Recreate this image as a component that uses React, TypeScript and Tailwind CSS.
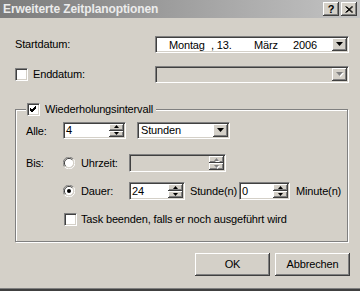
import React from "react";

const raised =
  "bg-[#d4d0c8] shadow-[inset_-1px_-1px_0_#404040,inset_1px_1px_0_#ffffff,inset_-2px_-2px_0_#808080,inset_2px_2px_0_#d4d0c8]";

function Tri({ up, disabled, w = 7, h = 4 }: { up?: boolean; disabled?: boolean; w?: number; h?: number }) {
  const pts = up ? `0,${h} ${w},${h} ${w / 2},0` : `0,0 ${w},0 ${w / 2},${h}`;
  return (
    <svg width={w + 1} height={h + 1} viewBox={`0 0 ${w + 1} ${h + 1}`}>
      {disabled && <polygon points={pts} fill="#ffffff" transform="translate(1,1)" />}
      <polygon points={pts} fill={disabled ? "#808080" : "#000000"} />
    </svg>
  );
}

function Field({
  className = "",
  disabled,
  children,
}: {
  className?: string;
  disabled?: boolean;
  children?: React.ReactNode;
}) {
  return (
    <div
      className={`flex items-stretch border border-t-[#808080] border-l-[#808080] border-b-white border-r-white p-[1px] shadow-[inset_1px_1px_0_#404040,inset_-1px_-1px_0_#d4d0c8] ${
        disabled ? "bg-[#d4d0c8]" : "bg-white"
      } ${className}`}
    >
      {children}
    </div>
  );
}

function DropBtn({ disabled }: { disabled?: boolean }) {
  return (
    <div className={`w-[15px] flex items-center justify-center ${raised}`}>
      <Tri disabled={disabled} />
    </div>
  );
}

function Spin({ disabled }: { disabled?: boolean }) {
  return (
    <div className="w-[15px] flex flex-col">
      <div className={`flex-1 flex items-center justify-center ${raised}`}>
        <Tri up disabled={disabled} w={5} h={3} />
      </div>
      <div className={`flex-1 flex items-center justify-center ${raised}`}>
        <Tri disabled={disabled} w={5} h={3} />
      </div>
    </div>
  );
}

function Check({ checked }: { checked?: boolean }) {
  return (
    <div className="w-[13px] h-[13px] shrink-0 bg-white border border-t-[#808080] border-l-[#808080] border-b-white border-r-white shadow-[inset_1px_1px_0_#404040,inset_-1px_-1px_0_#d4d0c8] flex items-center justify-center">
      {checked && (
        <svg width="7" height="7" viewBox="0 0 7 7">
          <path d="M0 2 L2 4 L6 0 M0 3 L2 5 L6 1 M0 4 L2 6 L6 2" stroke="#000" strokeWidth="1" fill="none" />
        </svg>
      )}
    </div>
  );
}

function Radio({ checked }: { checked?: boolean }) {
  return (
    <svg width="12" height="12" viewBox="0 0 12 12" className="shrink-0">
      <path d="M10.5 2.2 A5.5 5.5 0 0 0 1.5 9.8" stroke="#808080" strokeWidth="1" fill="none" />
      <path d="M1.5 9.8 A5.5 5.5 0 0 0 10.5 2.2" stroke="#ffffff" strokeWidth="1" fill="none" />
      <circle cx="6" cy="6" r="4.5" fill="#ffffff" />
      <path d="M9.3 2.8 A4.5 4.5 0 0 0 2.7 9.2" stroke="#404040" strokeWidth="1" fill="none" />
      <path d="M2.7 9.2 A4.5 4.5 0 0 0 9.3 2.8" stroke="#d4d0c8" strokeWidth="1" fill="none" />
      {checked && <circle cx="6" cy="6" r="2" fill="#000" />}
    </svg>
  );
}

export default function App() {
  return (
    <div className="w-[360px] h-[291px] bg-[#d4d0c8] flex flex-col overflow-hidden text-[11px] leading-none tracking-[-0.15px] text-black font-['Liberation_Sans',Arial,sans-serif]">
      {/* title bar */}
      <div className="h-[18px] shrink-0 flex items-center bg-gradient-to-r from-[#7c7c7c] to-[#c4c4c4] pl-[3px] pr-[3px]">
        <span className="font-bold text-[12px] tracking-[-0.1px] text-[#ececec]">Erweiterte Zeitplanoptionen</span>
        <div className="ml-auto flex gap-[2px]">
          <div className={`w-[16px] h-[14px] flex items-center justify-center text-[11px] font-bold ${raised}`}>?</div>
          <div className={`w-[16px] h-[14px] flex items-center justify-center ${raised}`}>
            <svg width="8" height="7" viewBox="0 0 8 7">
              <path d="M0.5 0.5 L7 6.5 M1.5 0.5 L8 6.5 M7 0.5 L0.5 6.5 M8 0.5 L1.5 6.5" stroke="#000" strokeWidth="1" />
            </svg>
          </div>
        </div>
      </div>

      <div className="flex flex-col flex-1 pl-[15px]">
        {/* Startdatum */}
        <div className="mt-[18px] flex items-center h-[17px]">
          <span className="w-[140px]">Startdatum:</span>
          <Field className="w-[194px] h-[17px]">
            <div className="flex-1 flex items-center pl-[12px] pt-[2px] h-full">
              <span className="w-[42px]">Montag</span>
              <span className="w-[43px]">, 13.</span>
              <span className="w-[39px]">März</span>
              <span>2006</span>
            </div>
            <DropBtn />
          </Field>
        </div>

        {/* Enddatum */}
        <div className="mt-[13px] flex items-center h-[17px]">
          <div className="w-[140px] flex items-center gap-[5px]">
            <Check />
            <span>Enddatum:</span>
          </div>
          <Field className="w-[194px] h-[17px]" disabled>
            <div className="flex-1" />
            <DropBtn disabled />
          </Field>
        </div>

        {/* group */}
        <div className="relative mt-[26px] w-[333px] h-[133px] border border-[#808080] shadow-[inset_1px_1px_0_#ffffff,1px_1px_0_#ffffff] pl-[10px] pt-[12px] flex flex-col">
          <div className="absolute left-[10px] top-[-7px] flex items-center gap-[5px] bg-[#d4d0c8] pl-[1px] pr-[3px]">
            <Check checked />
            <span>Wiederholungsintervall</span>
          </div>

          {/* Alle */}
          <div className="flex items-center h-[17px]">
            <span className="w-[37px] pt-[2px]">Alle:</span>
            <Field className="w-[63px] h-[17px]">
              <div className="flex-1 flex items-center pl-[1px]">4</div>
              <Spin />
            </Field>
            <Field className="ml-[11px] w-[93px] h-[17px]">
              <div className="flex-1 flex items-center pl-[2px]">Stunden</div>
              <DropBtn />
            </Field>
          </div>

          {/* Bis / Uhrzeit */}
          <div className="mt-[15px] flex items-center h-[18px]">
            <span className="w-[37px]">Bis:</span>
            <Radio />
            <span className="ml-[6px] w-[48px]">Uhrzeit:</span>
            <Field className="w-[97px] h-[18px]" disabled>
              <div className="flex-1" />
              <Spin disabled />
            </Field>
          </div>

          {/* Dauer */}
          <div className="mt-[10px] flex items-center h-[18px]">
            <span className="w-[37px]" />
            <Radio checked />
            <span className="ml-[6px] w-[48px]">Dauer:</span>
            <Field className="w-[56px] h-[18px]">
              <div className="flex-1 flex items-center pl-[1px]">24</div>
              <Spin />
            </Field>
            <span className="ml-[5px] w-[49px]">Stunde(n)</span>
            <Field className="w-[51px] h-[18px]">
              <div className="flex-1 flex items-center pl-[1px]">0</div>
              <Spin />
            </Field>
            <span className="ml-[6px]">Minute(n)</span>
          </div>

          {/* Task */}
          <div className="mt-[13px] flex items-center h-[13px] pl-[38px] gap-[4px]">
            <Check />
            <span>Task beenden, falls er noch ausgeführt wird</span>
          </div>
        </div>

        {/* buttons */}
        <div className="mt-[11px] flex justify-end gap-[5px] pr-[10px]">
          <div className={`w-[75px] h-[23px] flex items-center justify-center ${raised}`}>OK</div>
          <div className={`w-[75px] h-[23px] flex items-center justify-center ${raised}`}>Abbrechen</div>
        </div>
      </div>

      <div className="shrink-0 h-[1px] bg-[#808080]" />
      <div className="shrink-0 h-[2px] bg-[#404040]" />
    </div>
  );
}
